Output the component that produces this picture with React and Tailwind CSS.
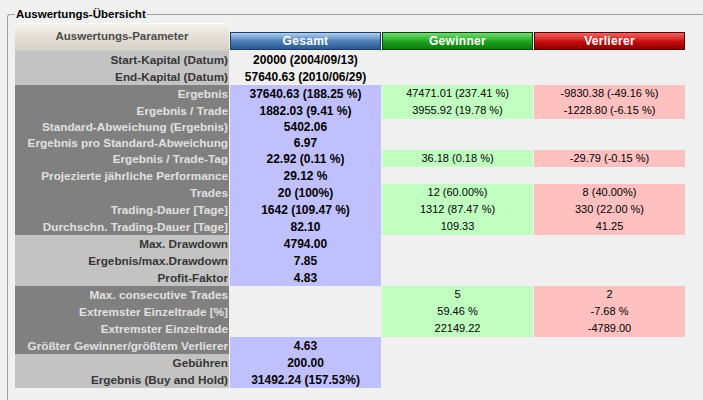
import React from 'react';

const rows = [
    { label: 'Start-Kapital (Datum)', tone: 'light', total: '20000 (2004/09/13)', plain: true },
    { label: 'End-Kapital (Datum)', tone: 'light', total: '57640.63 (2010/06/29)', plain: true },
    { label: 'Ergebnis', tone: 'dark', total: '37640.63 (188.25 %)', win: '47471.01 (237.41 %)', loss: '-9830.38 (-49.16 %)' },
    { label: 'Ergebnis / Trade', tone: 'dark', total: '1882.03 (9.41 %)', win: '3955.92 (19.78 %)', loss: '-1228.80 (-6.15 %)' },
    { label: 'Standard-Abweichung (Ergebnis)', tone: 'dark', total: '5402.06', h: 'h-[16px]' },
    { label: 'Ergebnis pro Standard-Abweichung', tone: 'dark', total: '6.97', h: 'h-[15px]' },
    { label: 'Ergebnis / Trade-Tag', tone: 'dark', total: '22.92 (0.11 %)', win: '36.18 (0.18 %)', loss: '-29.79 (-0.15 %)' },
    { label: 'Projezierte jährliche Performance', tone: 'dark', total: '29.12 %' },
    { label: 'Trades', tone: 'dark', total: '20 (100%)', win: '12 (60.00%)', loss: '8 (40.00%)' },
    { label: 'Trading-Dauer [Tage]', tone: 'dark', total: '1642 (109.47 %)', win: '1312 (87.47 %)', loss: '330 (22.00 %)' },
    { label: 'Durchschn. Trading-Dauer [Tage]', tone: 'dark', total: '82.10', win: '109.33', loss: '41.25' },
    { label: 'Max. Drawdown', tone: 'light', total: '4794.00' },
    { label: 'Ergebnis/max.Drawdown', tone: 'light', total: '7.85' },
    { label: 'Profit-Faktor', tone: 'light', total: '4.83' },
    { label: 'Max. consecutive Trades', tone: 'dark', win: '5', loss: '2' },
    { label: 'Extremster Einzeltrade [%]', tone: 'dark', win: '59.46 %', loss: '-7.68 %' },
    { label: 'Extremster Einzeltrade', tone: 'dark', win: '22149.22', loss: '-4789.00' },
    { label: 'Größter Gewinner/größtem Verlierer', tone: 'dark', total: '4.63' },
    { label: 'Gebühren', tone: 'light', total: '200.00' },
    { label: 'Ergebnis (Buy and Hold)', tone: 'light', total: '31492.24 (157.53%)' },
];

const App = () => {
    return (
        <div className="w-[703px] h-[400px] bg-[#f0f0f0] overflow-hidden pt-[14px] pl-[7px] font-['Liberation_Sans',Arial,sans-serif]">
            {/* Gruppenrahmen */}
            <div className="relative w-[696px] h-[386px] border-t border-l border-[#a0a0a0] rounded-tl-[3px] pl-[7px] pt-[8px]">
                <span className="absolute -top-[8px] left-[7px] px-[1px] bg-[#f0f0f0] text-[11.5px] leading-[14px] font-bold text-black">
                    Auswertungs-Übersicht
                </span>

                {/* Tabelle */}
                <div className="grid grid-cols-[215px_152px_152px_152px]">
                    {/* Kopfzeile */}
                    <div className="mr-px h-[28px] rounded-t-[5px] bg-gradient-to-b from-[#f4f2ec] via-[#e4e0d8] to-[#d4d0c6] shadow-[inset_0_1px_0_#ffffff] flex items-center justify-center text-[11.5px] font-bold text-[#4c4c4c]">
                        Auswertungs-Parameter
                    </div>
                    <div className="mr-px self-end mb-[1px] h-[18px] border border-[#1e3c64] bg-gradient-to-b from-[#b4d0ee] via-[#4f80b8] to-[#2a5890] flex items-center justify-center text-[12px] font-bold text-white leading-none tracking-[0.3px]">
                        Gesamt
                    </div>
                    <div className="mr-px self-end mb-[1px] h-[18px] border border-[#0c400c] bg-gradient-to-b from-[#70dc70] via-[#20a820] to-[#0c7c0c] flex items-center justify-center text-[12px] font-bold text-white leading-none tracking-[0.3px]">
                        Gewinner
                    </div>
                    <div className="mr-px self-end mb-[1px] h-[18px] border border-[#500000] bg-gradient-to-b from-[#f06060] via-[#cc1010] to-[#8c0000] flex items-center justify-center text-[12px] font-bold text-white leading-none tracking-[0.3px]">
                        Verlierer
                    </div>

                    {/* Datenzeilen */}
                    {rows.map((r, i) => {
                        const h = r.h || 'h-[17px]';
                        return (
                            <React.Fragment key={i}>
                                <div className={`mr-px ${h} ${r.tone === 'dark' ? 'bg-[#808080] text-[#e0e0e0]' : 'bg-[#c3c3c3] text-[#363636]'} flex items-center justify-end pr-[1px] text-[11.75px] font-bold whitespace-nowrap overflow-hidden`}>
                                    {r.label}
                                </div>
                                <div className={`mr-px ${h} ${r.total && !r.plain ? 'bg-[#c0c0ff]' : ''} flex items-center justify-center text-[12px] font-bold text-black whitespace-nowrap`}>
                                    {r.total}
                                </div>
                                <div className={`mr-px ${h} ${r.win ? 'bg-[#c0ffc0]' : ''} flex items-center justify-center text-[11px] text-black whitespace-nowrap`}>
                                    {r.win}
                                </div>
                                <div className={`mr-px ${h} ${r.loss ? 'bg-[#ffc0c0]' : ''} flex items-center justify-center text-[11px] text-black whitespace-nowrap`}>
                                    {r.loss}
                                </div>
                            </React.Fragment>
                        );
                    })}
                </div>
            </div>
        </div>
    );
};

export default App;
